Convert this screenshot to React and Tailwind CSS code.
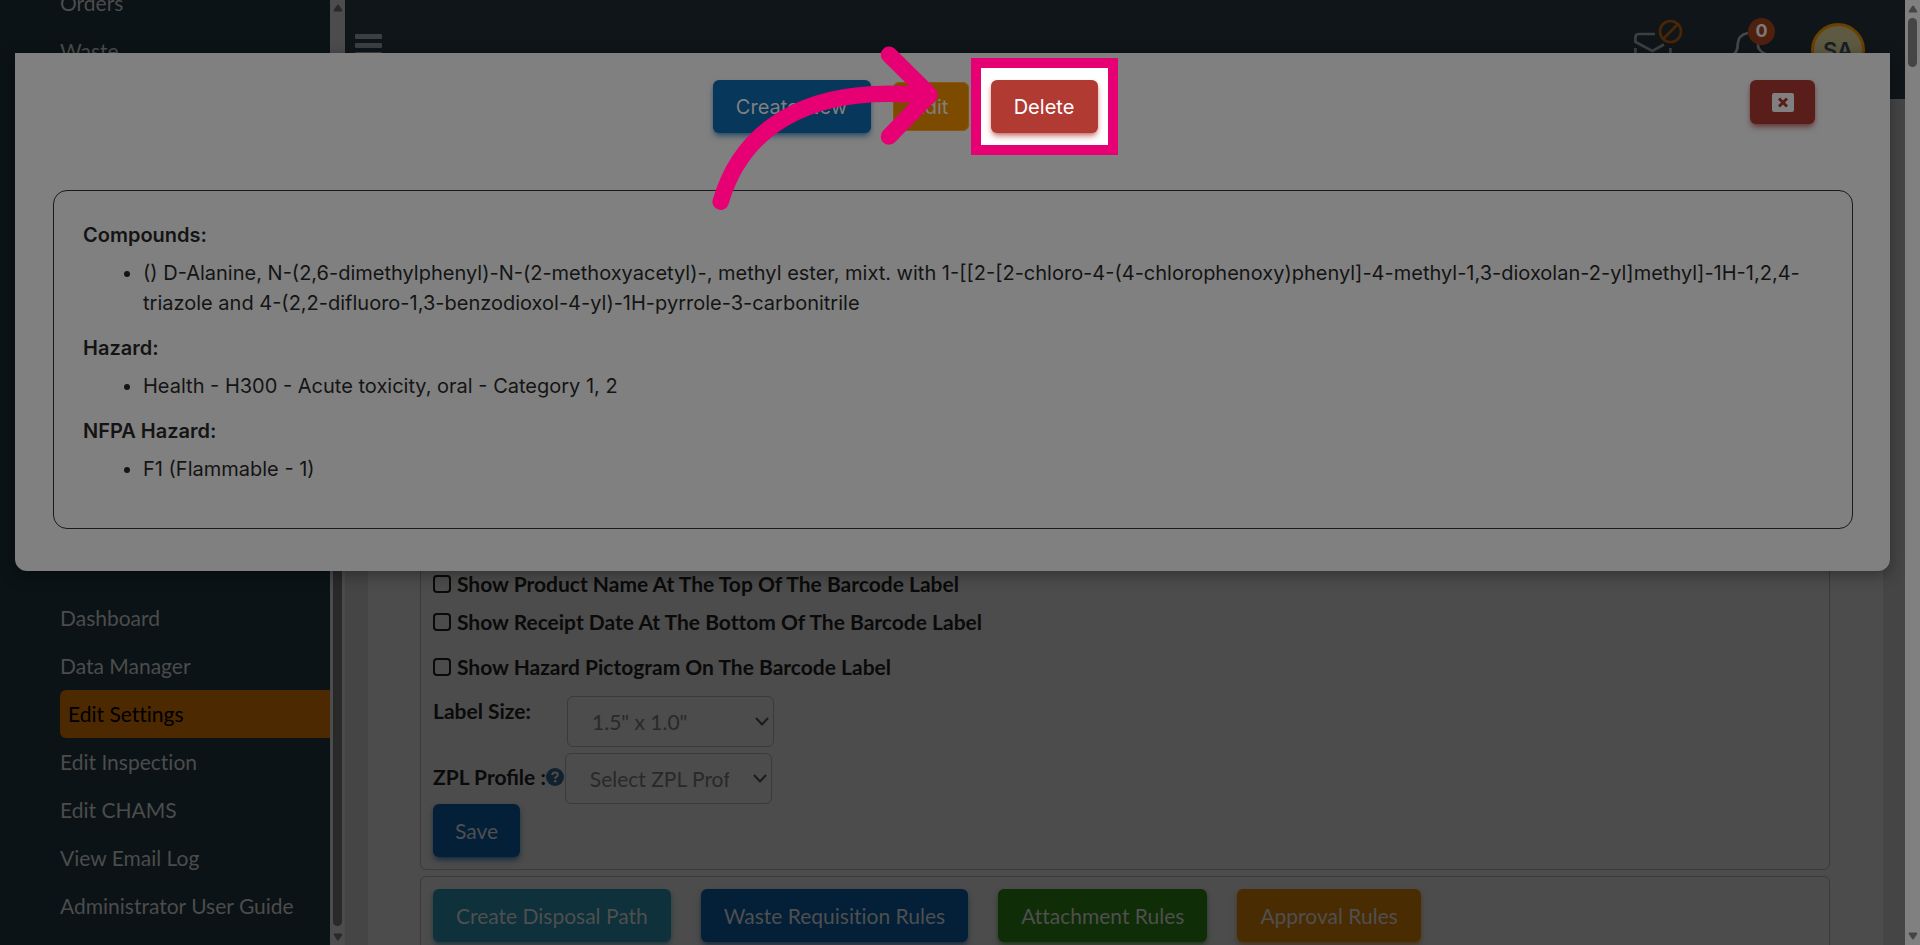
const LIGS = "[font-variant-ligatures:no-common-ligatures]";

const topLinks = ["Orders", "Waste"];
const bottomLinks = [
  "Dashboard",
  "Data Manager",
  "Edit Settings",
  "Edit Inspection",
  "Edit CHAMS",
  "View Email Log",
  "Administrator User Guide",
];

function SideLink({ label }) {
  const active = label === "Edit Settings";
  return (
    <a
      href="#"
      className={
        "flex h-12 shrink-0 items-center rounded-l-md " +
        (active ? "bg-[#4c2900] pl-2 text-black" : "text-[#4c4c4c]")
      }
    >
      {label}
    </a>
  );
}

function Arrow({ down }) {
  return (
    <svg viewBox="0 0 10 8" className={"h-2 w-[10px] shrink-0 " + (down ? "rotate-180" : "")}>
      <path d="M4.2 1 Q5 0 5.8 1 L9.2 6 Q9.6 7.6 8.4 7.6 H1.6 Q.4 7.6 .8 6 Z" fill="currentColor" />
    </svg>
  );
}

function Sidebar() {
  return (
    <nav className="flex w-[345px] shrink-0 bg-[#0b1316]">
      <div className={"flex min-w-0 flex-1 flex-col justify-between overflow-hidden pb-[15px] pl-[60px] " + LIGS}>
        <div className="-mt-[21px] flex flex-col">
          {topLinks.map((l) => (
            <SideLink key={l} label={l} />
          ))}
        </div>
        <div className="flex flex-col">
          {bottomLinks.map((l) => (
            <SideLink key={l} label={l} />
          ))}
        </div>
      </div>
      <div className="flex w-[15px] flex-col items-center bg-[#4c4c4c] py-1 text-[#292929]">
        <Arrow />
        <div className="mt-12 mb-[7px] w-[9px] flex-1 rounded-full bg-[#292929]" />
        <Arrow down />
      </div>
    </nav>
  );
}

function Header() {
  return (
    <header className="flex h-[99px] shrink-0 items-center bg-[#0f1519] pr-10 pl-[10px]">
      <button type="button" aria-label="Toggle menu" className="mb-2 flex w-[27px] flex-col gap-1">
        <span className="h-[5px] rounded-[1px] bg-[#3c3f41]" />
        <span className="h-[5px] rounded-[1px] bg-[#3c3f41]" />
        <span className="h-[5px] rounded-[1px] bg-[#3c3f41]" />
      </button>
      <div className="ml-auto flex items-center">
        <svg viewBox="0 0 52 64" className="mr-[46px] h-16 w-[52px]" fill="none">
          <g stroke="#3b4045" strokeWidth="2.7">
            <path d="M23 16H7Q3.400 16 3.400 19.500V24L20.400 33L32 26.500" />
            <path d="M3.400 30V50H38.400V30" />
          </g>
          <circle cx="38.500" cy="13.500" r="10.500" stroke="#4a2604" strokeWidth="2.700" />
          <path d="M31 21L46 6" stroke="#4a2604" strokeWidth="2.700" />
        </svg>
        <div className="relative mr-[33px] h-16 w-12">
          <svg viewBox="0 0 48 64" className="h-16 w-12" fill="none">
            <path
              d="M18 15Q8 17 7.700 26Q8 33 3 37V44H38V37Q27 33 28 26"
              stroke="#45474a"
              strokeWidth="2.700"
            />
          </svg>
          <span className="absolute top-0 right-[3px] flex size-[27px] items-center justify-center rounded-full bg-[#50200f] font-[Inter,sans-serif] text-lg leading-none font-bold text-[#7a7a7a]">
            0
          </span>
        </div>
        <span className="flex size-[54px] items-center justify-center rounded-full border-[3px] border-[#694100] bg-[#5e5941] font-[Inter,sans-serif] text-[22px] leading-none font-semibold text-[#182027]">
          SA
        </span>
      </div>
    </header>
  );
}

function CheckRow({ id, children }) {
  return (
    <div className="flex h-6 items-center gap-1.5">
      <input
        id={id}
        type="checkbox"
        className="size-[18px] shrink-0 appearance-none rounded-[4px] border-2 border-[#0a0a0a]"
      />
      <label htmlFor={id} className="font-bold text-[#0a0a0a]">
        {children}
      </label>
    </div>
  );
}

function Select({ id, option }) {
  return (
    <div className="relative w-[207px]">
      <select
        id={id}
        className="h-[51px] w-full appearance-none rounded-md border border-[#3a3a3a] bg-transparent pr-[42px] pl-6 text-[#292929]"
      >
        <option>{option}</option>
      </select>
      <svg viewBox="0 0 14 9" className="pointer-events-none absolute top-[21px] right-[5px] h-[9px] w-[14px]" fill="none">
        <path d="M1 1L7 7.500L13 1" stroke="#1c1c1c" strokeWidth="2" />
      </svg>
    </div>
  );
}

const ruleButtons = [
  ["Create Disposal Path", "bg-[#0e313b] shadow-[#0e313b]/60"],
  ["Waste Requisition Rules", "bg-[#032038] shadow-[#032038]/60"],
  ["Attachment Rules", "bg-[#0f2d06] shadow-[#0f2d06]/60"],
  ["Approval Rules", "bg-[#4a2c02] shadow-[#4a2c02]/60"],
];

function Settings() {
  return (
    <div className="flex flex-1 flex-col gap-1.5 overflow-hidden bg-[#4c4c4c] pt-[21px] pr-[53px] pl-[52px]">
      <section className={"flex shrink-0 flex-col rounded-md border border-[#3a3a3a] px-3 pt-[451px] pb-3 " + LIGS}>
        <CheckRow id="name">Show Product Name At The Top Of The Barcode Label</CheckRow>
        <div className="mt-3.5">
          <CheckRow id="date">Show Receipt Date At The Bottom Of The Barcode Label</CheckRow>
        </div>
        <div className="mt-[21px]">
          <CheckRow id="pictogram">Show Hazard Pictogram On The Barcode Label</CheckRow>
        </div>
        <div className="mt-[17px] flex items-start">
          <label htmlFor="size" className="w-[134px] pt-[3px] font-bold text-[#0a0a0a]">
            Label Size:
          </label>
          <Select id="size" option={'1.5" x 1.0"'} />
        </div>
        <div className="mt-1.5 flex items-center">
          <div className="flex items-center pr-px pb-1">
            <label
              htmlFor="zpl"
              className="font-bold text-[#0a0a0a] [font-variant-ligatures:normal]"
            >
              ZPL Profile :
            </label>
            <svg viewBox="0 0 18 18" className="size-[18px]" fill="none">
              <circle cx="9" cy="9" r="9" fill="#10222e" />
              <path d="M6.200 7Q6.500 4.500 9 4.500Q11.800 4.500 11.800 6.800Q11.800 8.300 10.200 9Q9.200 9.500 9.200 10.700" stroke="#4c4c4c" strokeWidth="2" />
              <circle cx="9.200" cy="13.200" r="1.300" fill="#4c4c4c" />
            </svg>
          </div>
          <Select id="zpl" option="Select ZPL Profile" />
        </div>
        <button
          type="button"
          className="h-[53px] self-start rounded-md bg-[#032038] px-[22px] text-[#4f4f4f] shadow-md shadow-[#032038]/60"
        >
          Save
        </button>
      </section>
      <section className={"flex shrink-0 gap-[30px] rounded-md border border-[#3a3a3a] px-3 pt-3 pb-6 " + LIGS}>
        {ruleButtons.map(([label, color]) => (
          <button
            key={label}
            type="button"
            className={"h-[53px] rounded-md px-[23px] text-[#4f4f4f] shadow-md " + color}
          >
            {label}
          </button>
        ))}
      </section>
    </div>
  );
}

function Group({ title, children }) {
  return (
    <section>
      <h2 className="mb-2 font-semibold">{title}</h2>
      <ul className="mb-[15px] list-disc pl-[60px]">
        <li>{children}</li>
      </ul>
    </section>
  );
}

function Modal() {
  return (
    <div
      role="dialog"
      aria-label="Hazard rule"
      className="absolute top-[53px] right-[30px] left-[15px] rounded-b-xl bg-[#808080] pb-[42px] font-[Inter,sans-serif] text-xl leading-[30px] text-[#141414] shadow-[0_4px_16px_rgba(0,0,0,0.35)]"
    >
      <div className="flex items-start pt-[27px] pr-[75px] pl-[45px]">
        <div className="flex flex-1 items-center justify-center gap-[22px]">
          <button type="button" className="h-[53px] w-[158px] rounded-md bg-[#07375a] text-[#808080] shadow-md shadow-[#07375a]/60">
            Create New
          </button>
          <button type="button" className="h-[49px] w-[76px] rounded-md border border-[#8a5607] bg-[#7d4b00] text-[#808080]">
            Edit
          </button>
          <div className="relative">
            <span className="absolute -inset-x-[20px] -inset-y-[22px] border-[10px] border-[#e60073] bg-white" />
            <button type="button" className="relative h-[53px] w-[107px] rounded-md bg-[#b13b33] text-white shadow-md shadow-[#b13b33]/60">
              Delete
            </button>
            <svg
              viewBox="0 0 280 175"
              className="pointer-events-none absolute -top-10 -left-[291px] h-[175px] w-[280px]"
              fill="none"
              stroke="#e60073"
              strokeWidth="16.500"
              strokeLinecap="round"
              strokeLinejoin="round"
            >
              <path d="M20.700 161.700C40 95 100 42 229 56" />
              <path d="M189 14.700L229.500 54.700L189 96.500" />
            </svg>
          </div>
        </div>
        <button
          type="button"
          aria-label="Close"
          className="flex h-11 w-[65px] items-center justify-center rounded-md bg-[#591e1a] shadow-md shadow-[#591e1a]/60"
        >
          <svg viewBox="0 0 22 19" className="h-[19px] w-[22px]" fill="none">
            <rect width="22" height="19" rx="2" fill="#808080" />
            <path d="M7 5.500L15 13.500M15 5.500L7 13.500" stroke="#591e1a" strokeWidth="3" />
          </svg>
        </button>
      </div>
      <div className="mt-[57px] mr-[37px] ml-[38px] rounded-[14px] border border-[#1a1a1a] px-[29px] pt-[29px] pb-[29px]">
        <Group title="Compounds:">
          () D-Alanine, N-(2,6-dimethylphenyl)-N-(2-methoxyacetyl)-, methyl ester, mixt. with
          1-[[2-[2-chloro-4-(4-chlorophenoxy)phenyl]-4-methyl-1,3-dioxolan-2-yl]methyl]-1H-1,2,4-triazole and
          4-(2,2-difluoro-1,3-benzodioxol-4-yl)-1H-pyrrole-3-carbonitrile
        </Group>
        <Group title="Hazard:">Health - H300 - Acute toxicity, oral - Category 1, 2</Group>
        <Group title="NFPA Hazard:">F1 (Flammable - 1)</Group>
      </div>
    </div>
  );
}

export default function App() {
  return (
    <div className="relative flex h-screen overflow-hidden font-[Lato,sans-serif] text-[21px] leading-6">
      <Sidebar />
      <div className="flex min-w-0 flex-1 flex-col bg-[#454545]">
        <Header />
        <main className="flex min-h-0 flex-1 pr-[22px] pl-[23px]">
          <Settings />
        </main>
      </div>
      <div className="flex w-[15px] shrink-0 flex-col items-center justify-between bg-[#808080] py-[5px] text-[#454545]">
        <div className="flex flex-col items-center gap-[5px]">
          <Arrow />
          <div className="h-[49px] w-[9px] rounded-full bg-[#454545]" />
        </div>
        <Arrow down />
      </div>
      <Modal />
    </div>
  );
}
